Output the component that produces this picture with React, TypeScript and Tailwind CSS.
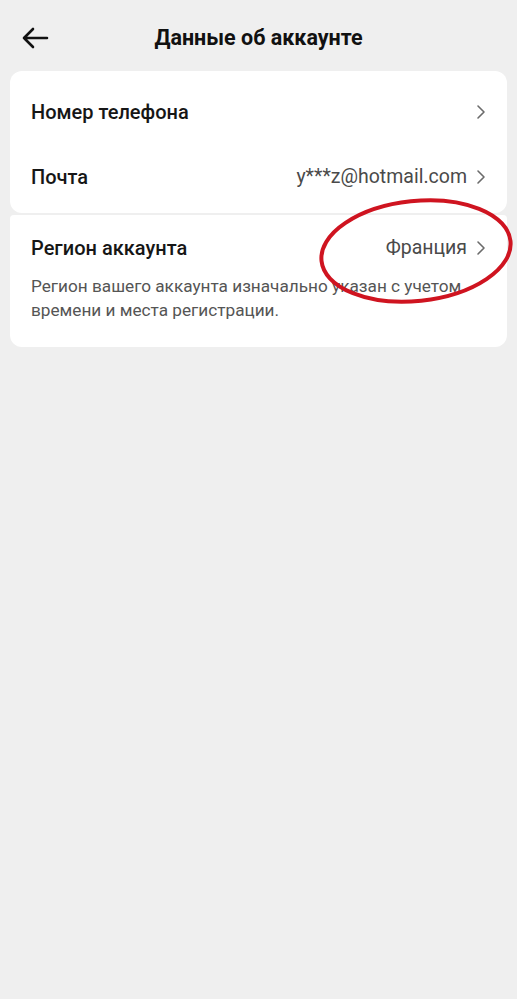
import React from 'react';

const Chevron = () => (
  <svg width="10" height="16" viewBox="0 0 10 16" fill="none" className="shrink-0">
    <polyline points="2,2 8,8 2,14" stroke="#6b6b6b" strokeWidth="1.6" strokeLinecap="round" strokeLinejoin="round" />
  </svg>
);

const Row = ({ label, value }: { label: string; value?: string }) => (
  <div className="flex items-center justify-between h-[65px]">
    <span className="text-[20px] font-medium text-[#161616]">{label}</span>
    <div className="flex items-center gap-[9px]">
      {value && <span className="text-[19.5px] text-[#4a4a4a]">{value}</span>}
      <Chevron />
    </div>
  </div>
);

export default function App() {
  return (
    <div className="min-h-[999px] bg-[#efefef] relative" style={{ fontFamily: 'Roboto, "Noto Sans", sans-serif' }}>
      {/* header */}
      <header className="relative flex items-center justify-center h-[71px] pt-[5px]">
        <button className="absolute left-[21px] top-[26px] p-0">
          <svg width="28" height="24" viewBox="0 0 28 24" fill="none">
            <path d="M26 12H3M12 3L3 12l9 9" stroke="#111" strokeWidth="2.6" strokeLinecap="round" strokeLinejoin="round" />
          </svg>
        </button>
        <h1 className="text-[21.5px] font-bold text-[#111]">Данные об аккаунте</h1>
      </header>

      <div className="px-[10px]">
        <div className="bg-white rounded-xl px-[21px] pt-[8px] pb-[4px]">
          <Row label="Номер телефона" />
          <Row label="Почта" value="y***z@hotmail.com" />
        </div>

        <div className="bg-white rounded-b-xl rounded-t-sm mt-[2px] px-[21px] pt-[18px] pb-[25px]">
          <div className="flex items-center justify-between h-[30px]">
            <span className="text-[20px] font-medium text-[#161616]">Регион аккаунта</span>
            <div className="flex items-center gap-[9px]">
              <span className="text-[19.5px] text-[#4a4a4a]">Франция</span>
              <Chevron />
            </div>
          </div>
          <p className="mt-[11px] text-[17.2px] leading-[24px] text-[#555]">
            Регион вашего аккаунта изначально указан с учетом времени и места регистрации.
          </p>
        </div>
      </div>

      {/* red marker ellipse drawn over content */}
      <svg className="absolute left-[312px] top-[192px] pointer-events-none" width="205" height="120" viewBox="0 0 205 120" fill="none">
        <ellipse cx="104" cy="59" rx="95" ry="50" transform="rotate(-6 104 59)" stroke="#cf1420" strokeWidth="4" />
      </svg>
    </div>
  );
}
